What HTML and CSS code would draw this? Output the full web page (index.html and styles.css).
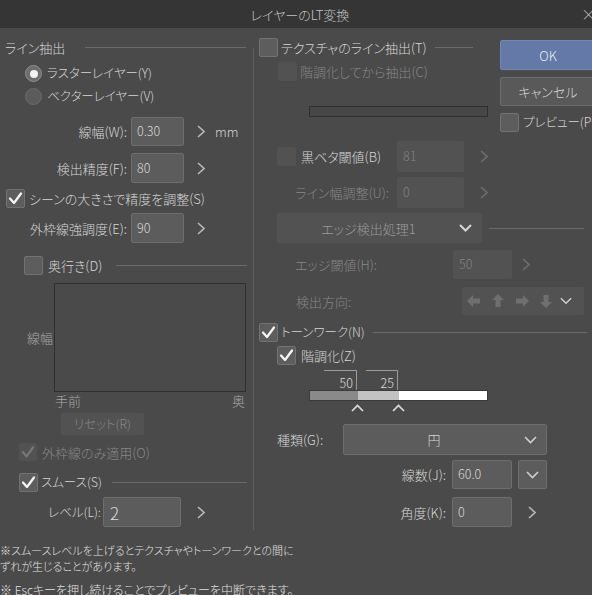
FILE: index.html
```html
<!DOCTYPE html>
<html lang="ja">
<head>
<meta charset="utf-8">
<title>レイヤーのLT変換</title>
<link rel="stylesheet" href="styles.css">
</head>
<body>
<div class="titlebar">レイヤーのLT変換<span class="close">×</span></div>
<div class="main">
  <div class="left">
    <div class="row h19 sec"><span class="sec-t">ライン抽出</span><span class="hline l-sec1"></span></div>
    <div class="row h19 mt7 pl25"><span class="radio on"></span><span class="ml5 kana">ラスターレイヤー(Y)</span></div>
    <div class="row h19 mt4 pl25"><span class="radio"></span><span class="ml5 kana">ベクターレイヤー(V)</span></div>
    <div class="row h29 mt11"><span class="flabel w127">線幅(W):</span><span class="input w53 ml4">0.30</span><span class="chev ml13"><svg width="8" height="13" viewBox="0 0 8 13"><polyline points="1,1 7,6.5 1,12"/></svg></span><span class="unit">mm</span></div>
    <div class="row h30 mt7"><span class="flabel w127">検出精度(F):</span><span class="input w53 ml4">80</span><span class="chev ml13"><svg width="8" height="13" viewBox="0 0 8 13"><polyline points="1,1 7,6.5 1,12"/></svg></span></div>
    <div class="row h19 mt6 pl6"><span class="cb"><svg width="19" height="19" viewBox="0 0 19 19"><polyline points="4,9.5 8,14 15,4.5"/></svg></span><span class="ml4">シーンの大きさで精度を調整(S)</span></div>
    <div class="row h30 mt5"><span class="flabel w127">外枠線強調度(E):</span><span class="input w53 ml4">90</span><span class="chev ml13"><svg width="8" height="13" viewBox="0 0 8 13"><polyline points="1,1 7,6.5 1,12"/></svg></span></div>
    <div class="row h19 mt13 pl24"><span class="cb"></span><span class="ml5">奥行き(D)</span><span class="hline l-depth"></span></div>
    <div class="row graph-row mt8"><span class="graph-label">線幅</span><div class="graph"></div></div>
    <div class="axis"><span>手前</span><span>奥</span></div>
    <div class="reset mt5">リセット(R)</div>
    <div class="row h18 mt8 pl19"><span class="cb dis sm"><svg width="18" height="18" viewBox="0 0 19 19"><polyline points="4,9.5 8,14 15,4.5"/></svg></span><span class="ml5 grey">外枠線のみ適用(O)</span></div>
    <div class="row h19 mt12 pl19"><span class="cb"><svg width="19" height="19" viewBox="0 0 19 19"><polyline points="4,9.5 8,14 15,4.5"/></svg></span><span class="ml3 kana">スムース(S)</span><span class="hline l-smooth"></span></div>
    <div class="row h30 mt5"><span class="flabel w101 kana">レベル(L):</span><span class="input w78 ml2 big">2</span><span class="chev ml16"><svg width="8" height="13" viewBox="0 0 8 13"><polyline points="1,1 7,6.5 1,12"/></svg></span></div>
  </div>
  <div class="sep"></div>
  <div class="right">
    <div class="top">
      <div class="top-mid">
        <div class="row h19 pl2"><span class="cb"></span><span class="ml3">テクスチャのライン抽出(T)</span><span class="hline l-tex"></span></div>
        <div class="row h19 mt5 pl21"><span class="cb dis"></span><span class="ml3 grey">階調化してから抽出(C)</span></div>
        <div class="progress"></div>
      </div>
      <div class="buttons">
        <div class="btn ok">OK</div>
        <div class="btn cancel">キャンセル</div>
        <div class="row h19 mt7"><span class="cb"></span><span class="ml4 kana">プレビュー(P)</span></div>
      </div>
    </div>
    <div class="row h31 mt9 pl20"><span class="cb dis"></span><span class="flabel-l w96 ml5">黒ベタ閾値(B)</span><span class="input dis w67">81</span><span class="chev dis ml16"><svg width="8" height="13" viewBox="0 0 8 13"><polyline points="1,1 7,6.5 1,12"/></svg></span></div>
    <div class="row h31 mt5"><span class="flabel w132 grey">ライン幅調整(U):</span><span class="input dis w67 ml8">0</span><span class="chev dis ml16"><svg width="8" height="13" viewBox="0 0 8 13"><polyline points="1,1 7,6.5 1,12"/></svg></span></div>
    <div class="row h30 mt5 pl20"><div class="dd dis w205"><span class="dd-t">エッジ検出処理1</span><span class="dd-c"><svg width="13" height="8" viewBox="0 0 13 8"><polyline points="1,1 6.5,6.5 12,1"/></svg></span></div><span class="hline l-edge"></span></div>
    <div class="row h29 mt7 pl38"><span class="flabel-l w158 grey">エッジ閾値(H):</span><span class="input dis w59">50</span><span class="chev dis ml10"><svg width="8" height="13" viewBox="0 0 8 13"><polyline points="1,1 7,6.5 1,12"/></svg></span></div>
    <div class="row h28 mt8 pl39"><span class="flabel-l w166 grey">検出方向:</span>
      <div class="dirs">
        <svg width="14" height="12" viewBox="0 0 14 12"><polygon points="0,6 6,0 6,3.5 13,3.5 13,8.5 6,8.5 6,12"/></svg>
        <svg width="12" height="14" viewBox="0 0 12 14"><polygon points="6,0 12,6 8.5,6 8.5,13 3.5,13 3.5,6 0,6"/></svg>
        <svg width="14" height="12" viewBox="0 0 14 12"><polygon points="14,6 8,0 8,3.5 1,3.5 1,8.5 8,8.5 8,12"/></svg>
        <svg width="12" height="14" viewBox="0 0 12 14"><polygon points="6,14 12,8 8.5,8 8.5,1 3.5,1 3.5,8 0,8"/></svg>
        <svg class="dchev" width="12" height="8" viewBox="0 0 13 8"><polyline points="1,1 6.5,6.5 12,1"/></svg>
      </div>
    </div>
    <div class="row h19 mt8 pl2"><span class="cb"><svg width="19" height="19" viewBox="0 0 19 19"><polyline points="4,9.5 8,14 15,4.5"/></svg></span><span class="ml3 kana">トーンワーク(N)</span><span class="hline l-tone"></span></div>
    <div class="row h19 mt4 pl20"><span class="cb"><svg width="19" height="19" viewBox="0 0 19 19"><polyline points="4,9.5 8,14 15,4.5"/></svg></span><span class="ml5">階調化(Z)</span></div>
    <div class="slider mt5">
      <div class="marker" style="left:67px;width:33px">50</div>
      <div class="marker" style="left:109px;width:32px">25</div>
      <div class="bar"><span class="seg s1" style="width:48px"></span><span class="seg s2" style="width:41px"></span><span class="seg s3"></span></div>
      <svg class="caret" style="left:94px" width="13" height="8" viewBox="0 0 13 8"><polyline points="1,7 6.5,1.5 12,7"/></svg>
      <svg class="caret" style="left:135px" width="13" height="8" viewBox="0 0 13 8"><polyline points="1,7 6.5,1.5 12,7"/></svg>
    </div>
    <div class="row h31 mt12 pl20"><span class="flabel-l w66">種類(G):</span><div class="dd w204"><span class="dd-t">円</span><span class="dd-c"><svg width="13" height="8" viewBox="0 0 13 8"><polyline points="1,1 6.5,6.5 12,1"/></svg></span></div></div>
    <div class="row h29 mt5"><span class="flabel w189">線数(J):</span><span class="input w60 ml6">60.0</span><span class="ddbtn ml6"><svg width="13" height="8" viewBox="0 0 13 8"><polyline points="1,1 6.5,6.5 12,1"/></svg></span></div>
    <div class="row h30 mt8"><span class="flabel w189">角度(K):</span><span class="input w60 ml6">0</span><span class="chev ml16"><svg width="8" height="13" viewBox="0 0 8 13"><polyline points="1,1 7,6.5 1,12"/></svg></span></div>
  </div>
</div>
<div class="notes">
  <p>※スムースレベルを上げるとテクスチャやトーンワークとの間に<br>ずれが生じることがあります。</p>
  <p class="n2">※ Escキーを押し続けることでプレビューを中断できます。</p>
</div>
</body>
</html>
```
FILE: styles.css
```css
* { box-sizing: border-box; }
html, body { margin: 0; padding: 0; }
body {
  width: 592px;
  height: 595px;
  overflow: hidden;
  background: #4a4a4a;
  color: #d6d6d6;
  font-family: "Noto Sans CJK JP", "Noto Sans", sans-serif;
  font-size: 13px;
  font-weight: 300;
  line-height: 1;
  font-feature-settings: "palt";
}
.kana { font-size: 12.5px; }
.titlebar {
  position: relative;
  height: 28px;
  background: #353535;
  color: #c4c4c4;
  font-size: 13px;
  display: flex;
  align-items: center;
  justify-content: center;
  padding-left: 8px;
}
.close { position: absolute; right: -4px; top: 6px; font-size: 15px; color: #bdbdbd; }
.main { display: flex; padding-top: 10px; }
.left { width: 253px; padding-right: 7px; flex: none; }
.sep { flex: none; width: 1px; background: #5f5f5f; margin-top: 10px; height: 482px; }
.right { flex: 1; margin-left: 3px; min-width: 0; }

.row { display: flex; align-items: center; white-space: nowrap; }
.h18 { height: 18px; } .h19 { height: 19px; } .h28 { height: 28px; } .h29 { height: 29px; }
.h30 { height: 30px; } .h31 { height: 31px; }
.mt4 { margin-top: 4px; } .mt5 { margin-top: 5px; } .mt6 { margin-top: 6px; } .mt7 { margin-top: 7px; }
.mt8 { margin-top: 8px; } .mt9 { margin-top: 9px; } .mt11 { margin-top: 11px; } .mt12 { margin-top: 12px; }
.mt13 { margin-top: 13px; }
.pl2 { padding-left: 2px; } .pl6 { padding-left: 6px; } .pl19 { padding-left: 19px; } .pl20 { padding-left: 20px; }
.pl21 { padding-left: 21px; } .pl24 { padding-left: 24px; } .pl25 { padding-left: 25px; }
.pl38 { padding-left: 38px; } .pl39 { padding-left: 39px; }
.ml2 { margin-left: 2px; } .ml3 { margin-left: 3px; } .ml4 { margin-left: 4px; } .ml5 { margin-left: 5px; }
.ml6 { margin-left: 6px; } .ml8 { margin-left: 8px; } .ml10 { margin-left: 10px; } .ml13 { margin-left: 13px; }
.ml16 { margin-left: 16px; }
.grey { color: #878787; }

.sec-t { padding-left: 5px; font-size: 13px; }
.hline { height: 1px; background: #6a6a6a; }
.l-sec1 { margin-left: 20px; flex: 1; }
.l-depth { margin-left: 14px; flex: 1; margin-right: -1px; }
.l-smooth { margin-left: 10px; flex: 1; margin-right: -1px; }
.l-tex { margin-left: 8px; flex: 1; margin-right: 17px; }
.l-edge { margin-left: 7px; width: 95px; }
.l-tone { margin-left: 8px; flex: 1; margin-right: 5px; }

.radio {
  width: 17px; height: 17px; border-radius: 50%;
  background: #5b5b5b; border: 1px solid #6c6c6c; flex: none;
  display: flex; align-items: center; justify-content: center;
}
.radio.on { background: #6e6e6e; border-color: #8e8e8e; }
.radio.on::after { content: ""; width: 8px; height: 8px; border-radius: 50%; background: #f2f2f2; }

.cb {
  width: 19px; height: 19px; flex: none;
  background: #5d5d5d; border: 1px solid #727272; border-radius: 2px;
  display: flex; align-items: center; justify-content: center; overflow: hidden;
}
.cb svg { flex: none; }
.cb polyline { fill: none; stroke: #f4f4f4; stroke-width: 2.3; stroke-linecap: round; stroke-linejoin: round; }
.cb.dis { background: #525252; border-color: #525252; }
.cb.dis polyline { stroke: #777777; }
.cb.sm { width: 18px; height: 18px; }

.flabel { text-align: right; flex: none; }
.flabel-l { text-align: left; flex: none; }
.w66 { width: 66px; } .w96 { width: 96px; } .w101 { width: 101px; } .w127 { width: 127px; }
.w132 { width: 132px; } .w158 { width: 158px; } .w166 { width: 166px; } .w189 { width: 189px; }

.input {
  flex: none; height: 100%;
  background: #5c5c5c; border: 1px solid #6d6d6d; border-radius: 2px;
  display: flex; align-items: center; padding-left: 5px; color: #dadada; font-size: 12.5px;
}
.input.dis { background: #525252; border-color: #525252; color: #848484; }
.input.big { font-size: 17px; padding-left: 6px; }
.w53 { width: 53px; } .w59 { width: 59px; } .w60 { width: 60px; } .w67 { width: 67px; } .w78 { width: 78px; }

.chev { display: flex; align-items: center; flex: none; }
.chev polyline { fill: none; stroke: #b8b8b8; stroke-width: 1.6; }
.chev.dis polyline { stroke: #6e6e6e; }
.unit { margin-left: 10px; font-size: 13px; }

.graph-row { height: 109px; align-items: center; }
.graph-label { width: 54px; text-align: right; padding-right: 1px; color: #a8a8a8; flex: none; }
.graph { width: 192px; height: 109px; border: 1px solid #2f2f2f; flex: none; }
.axis { height: 16px; display: flex; justify-content: space-between; align-items: center; padding-left: 55px; width: 245px; color: #a8a8a8; }
.reset {
  margin-left: 61px; width: 83px; height: 22px; border-radius: 2px;
  background: #525252; color: #888888; display: flex; align-items: center; justify-content: center;
  font-size: 12.5px;
}

.top { display: flex; height: 94px; }
.top-mid { width: 233px; flex: none; }
.progress { margin-top: 25px; margin-left: 52px; width: 179px; height: 11px; border: 1px solid #2f2f2f; background: #474747; }
.buttons { margin-left: 10px; width: 96px; flex: none; }
.btn { display: flex; align-items: center; justify-content: center; border-radius: 2px; font-size: 13px; }
.btn.ok { margin-top: 2px; height: 30px; background: #6479a7; border: 1px solid #7487b3; color: #e8ecf4; }
.btn.cancel { margin-top: 7px; height: 29px; background: #595959; border: 1px solid #6c6c6c; color: #d8d8d8; }

.dd {
  height: 100%; flex: none; display: flex; align-items: center;
  background: #5c5c5c; border: 1px solid #6d6d6d; border-radius: 2px;
}
.dd.dis { background: #525252; border-color: #525252; color: #9a9a9a; }
.dd-t { flex: 1; text-align: center; }
.dd-c { width: 20px; flex: none; display: flex; align-items: center; margin-right: 2px; }
.dd-c polyline, .ddbtn polyline, .dchev polyline { fill: none; stroke: #cfcfcf; stroke-width: 1.6; }
.dd.dis .dd-c polyline { stroke: #d4d4d4; stroke-width: 2; }
.w204 { width: 204px; } .w205 { width: 205px; }
.ddbtn {
  width: 29px; height: 100%; flex: none; display: flex; align-items: center; justify-content: center;
  background: #5c5c5c; border: 1px solid #6d6d6d; border-radius: 2px;
}
.dirs {
  width: 122px; height: 100%; flex: none; background: #525252; border-radius: 2px;
  display: flex; align-items: center; padding-left: 5px; gap: 11px;
}
.dirs polygon { fill: #6f6f6f; }
.dirs .dchev { margin-left: -3px; }

.slider { position: relative; height: 42px; }
.marker {
  position: absolute; top: 0; height: 20px;
  border-top: 1px solid #9a9a9a; border-right: 1px solid #9a9a9a;
  text-align: right; padding-right: 3px; padding-top: 6px; font-size: 12.5px; color: #dcdcdc;
}
.bar { position: absolute; left: 52px; top: 20px; width: 179px; height: 11px; display: flex; border: 1px solid #3a3a3a; }
.seg { height: 100%; flex: none; }
.s1 { background: #8a8a8a; }
.s2 { background: #c2c2c2; }
.s3 { flex: 1; background: #ffffff; }
.caret { position: absolute; top: 34px; }
.caret polyline { fill: none; stroke: #dcdcdc; stroke-width: 1.7; }

.notes { margin-top: 12px; color: #e0e0e0; font-size: 11px; }
.notes p { margin: 0; line-height: 16px; }
.notes .n2 { margin-top: 8px; font-size: 12px; }
```
